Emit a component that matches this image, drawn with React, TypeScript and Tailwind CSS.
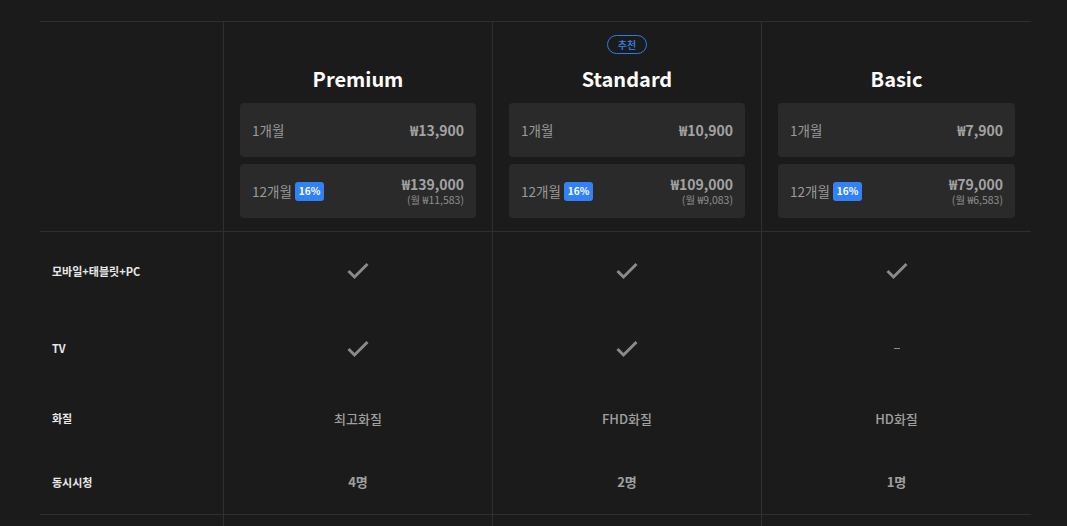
import React from 'react';

type Plan = {
  name: string;
  recommended?: boolean;
  monthly: string;
  yearly: string;
  perMonth: string;
  tv: boolean;
  quality: string;
  screens: string;
};

const plans: Plan[] = [
  { name: 'Premium', monthly: '₩13,900', yearly: '₩139,000', perMonth: '(월 ₩11,583)', tv: true, quality: '최고화질', screens: '4명' },
  { name: 'Standard', recommended: true, monthly: '₩10,900', yearly: '₩109,000', perMonth: '(월 ₩9,083)', tv: true, quality: 'FHD화질', screens: '2명' },
  { name: 'Basic', monthly: '₩7,900', yearly: '₩79,000', perMonth: '(월 ₩6,583)', tv: false, quality: 'HD화질', screens: '1명' },
];

const font = { fontFamily: '"Noto Sans CJK KR", "Noto Sans", sans-serif' };

const Check = () => (
  <svg width="24" height="18" viewBox="0 0 24 18" fill="none">
    <polyline points="2.5,9 8.5,15 21.5,2" stroke="#8a8a8a" strokeWidth="3" />
  </svg>
);

const gridCols = 'grid grid-cols-[183px_269px_269px_270px]';

const App = () => {
  return (
    <div className="min-h-screen w-full bg-[#1b1b1b] pt-[21px]" style={font}>
      <div className="ml-[40px] w-[991px]">
        {/* Header row */}
        <div className={`${gridCols} border-t border-b border-[#2f2f2f]`}>
          <div />
          {plans.map((p) => (
            <div key={p.name} className="flex flex-col items-center border-l border-[#2f2f2f] px-4 pt-[13px] pb-[13px]">
              <div className="h-[19px]">
                {p.recommended && (
                  <span className="flex h-[19px] items-center rounded-full border border-[#2f7be6] px-[10px] text-[10px] font-medium leading-none text-[#3a86f0]">
                    추천
                  </span>
                )}
              </div>
              <div className="mt-[11px] mb-[10px] text-[20px] font-bold leading-[28px] text-white">{p.name}</div>
              <div className="flex h-[54px] w-full items-center justify-between rounded-[4px] bg-[#2a2a2a] px-[12px]">
                <span className="text-[13.5px] text-[#9a9a9a]">1개월</span>
                <span className="text-[14px] font-bold text-[#a3a3a3]">{p.monthly}</span>
              </div>
              <div className="mt-[7px] flex h-[54px] w-full items-center justify-between rounded-[4px] bg-[#2a2a2a] px-[12px]">
                <div className="flex items-center gap-[3px]">
                  <span className="text-[13.5px] text-[#9a9a9a]">12개월</span>
                  <span className="flex h-[19px] items-center rounded-[3px] bg-[#3182f6] px-[4px] text-[10px] font-semibold leading-none text-white">
                    16%
                  </span>
                </div>
                <div className="flex flex-col items-end">
                  <span className="text-[14px] font-bold leading-[18px] text-[#a3a3a3]">{p.yearly}</span>
                  <span className="text-[10.5px] leading-[14px] text-[#8e8e8e]">{p.perMonth}</span>
                </div>
              </div>
            </div>
          ))}
        </div>

        {/* Feature rows */}
        <div className={`${gridCols} h-[78px]`}>
          <div className="flex items-center pl-[12px] text-[11px] font-bold text-[#e8e8e8]">모바일+태블릿+PC</div>
          {plans.map((p) => (
            <div key={p.name} className="flex items-center justify-center border-l border-[#2f2f2f]">
              <Check />
            </div>
          ))}
        </div>
        <div className={`${gridCols} h-[77px]`}>
          <div className="flex items-center pl-[12px] text-[11px] font-bold text-[#e8e8e8]">TV</div>
          {plans.map((p) => (
            <div key={p.name} className="flex items-center justify-center border-l border-[#2f2f2f]">
              {p.tv ? <Check /> : <span className="h-px w-[6px] bg-[#8a8a8a]" />}
            </div>
          ))}
        </div>
        <div className={`${gridCols} h-[63px]`}>
          <div className="flex items-center pl-[12px] text-[11px] font-bold text-[#e8e8e8]">화질</div>
          {plans.map((p) => (
            <div key={p.name} className="flex items-center justify-center border-l border-[#2f2f2f] text-[13px] font-medium text-[#a0a0a0]">
              {p.quality}
            </div>
          ))}
        </div>
        <div className={`${gridCols} h-[65px] border-b border-[#2f2f2f]`}>
          <div className="flex items-center pl-[12px] text-[11px] font-bold text-[#e8e8e8]">동시시청</div>
          {plans.map((p) => (
            <div key={p.name} className="flex items-center justify-center border-l border-[#2f2f2f] text-[13px] font-semibold text-[#a0a0a0]">
              {p.screens}
            </div>
          ))}
        </div>
        <div className={`${gridCols} h-[60px]`}>
          <div />
          {plans.map((p) => (
            <div key={p.name} className="border-l border-[#2f2f2f]" />
          ))}
        </div>
      </div>
    </div>
  );
};

export default App;
